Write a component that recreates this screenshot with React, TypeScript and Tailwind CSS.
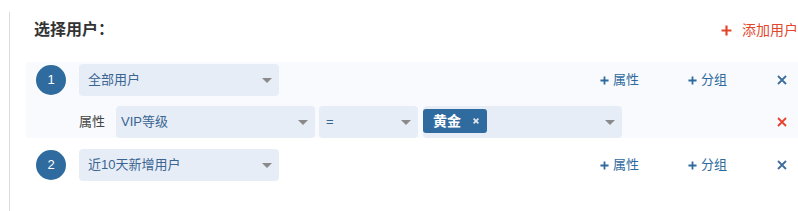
import React from 'react';

// ─── Small icons ──────────────────────────────────────────────────────────────
function PlusIcon({ className = '' }: { className?: string }) {
    return (
        <svg viewBox="0 0 10 10" className={className} fill="none" stroke="currentColor" strokeWidth={2}>
            <path d="M5 0.5v9M0.5 5h9" />
        </svg>
    );
}

function CrossIcon({ className = '', stroke = 1.8 }: { className?: string; stroke?: number }) {
    return (
        <svg viewBox="0 0 10 10" className={className} fill="none" stroke="currentColor" strokeWidth={stroke}>
            <path d="M1 1l8 8M9 1l-8 8" />
        </svg>
    );
}

function Caret() {
    return (
        <svg viewBox="0 0 10 5" className="w-[10px] h-[5px] text-[#8a8a8a]" fill="currentColor">
            <path d="M0 0h10L5 5z" />
        </svg>
    );
}

// ─── Select box ───────────────────────────────────────────────────────────────
function Select({ width, pl = 'pl-[9px]', children }: { width: string; pl?: string; children?: React.ReactNode }) {
    return (
        <div className={`${width} ${pl} h-[32px] shrink-0 flex items-center justify-between bg-[#e7edf7] rounded-[4px] pr-[7px] text-[13px] text-[#3a6592]`}>
            <div className="flex items-center">{children}</div>
            <Caret />
        </div>
    );
}

function Actions() {
    return (
        <div className="ml-auto flex items-center text-[13px] text-[#2f6a9e]">
            <span className="w-[88px] flex items-center gap-[4px]">
                <PlusIcon className="w-[9px] h-[9px]" />
                属性
            </span>
            <span className="w-[89px] flex items-center gap-[4px]">
                <PlusIcon className="w-[9px] h-[9px]" />
                分组
            </span>
            <CrossIcon className="w-[10px] h-[10px] text-[#3d6d9c]" />
        </div>
    );
}

function Badge({ n }: { n: number }) {
    return (
        <div className="w-[30px] h-[30px] shrink-0 rounded-full bg-[#2f6b9e] text-white text-[13px] flex items-center justify-center">
            {n}
        </div>
    );
}

export default function App() {
    return (
        <div
            className="w-[798px] h-[211px] overflow-hidden bg-white"
            style={{ fontFamily: '"Liberation Sans", "Noto Sans CJK SC", sans-serif' }}
        >
            <div className="ml-[9px] mt-[12px] h-[199px] border-l border-[#dcdcdc] pl-[16px]">
                {/* ── Title ── */}
                <div className="h-[36px] flex items-center justify-between pl-[8px]">
                    <h3 className="text-[16px] font-bold text-[#333]">选择用户：</h3>
                    <button className="flex items-center text-[14px] text-[#e2472d]">
                        <PlusIcon className="w-[11px] h-[11px] mr-[10px]" />
                        添加用户
                    </button>
                </div>

                {/* ── User 1 with attribute ── */}
                <div className="mt-[14px] w-[772px] bg-[#f8fafd] pt-[2px] pr-[11px]">
                    <div className="flex items-center h-[32px]">
                        <div className="w-[53px] pl-[10px]">
                            <Badge n={1} />
                        </div>
                        <Select width="w-[200px]">全部用户</Select>
                        <Actions />
                    </div>
                    <div className="mt-[10px] flex items-center h-[32px]">
                        <span className="w-[90px] pl-[53px] text-[13px] text-[#444]">属性</span>
                        <Select width="w-[199px]" pl="pl-[5px]">VIP等级</Select>
                        <div className="w-[4px]" />
                        <Select width="w-[99px]" pl="pl-[7px]">=</Select>
                        <div className="w-[5px]" />
                        <div className="w-[199px] h-[32px] shrink-0 flex items-center justify-between bg-[#e7edf7] rounded-[4px] pr-[7px]">
                            <span className="h-[24px] w-[64px] -mt-[2px] rounded-[3px] bg-[#2f6b9e] text-white text-[14px] font-bold flex items-center pl-[10px]">
                                黄金
                                <CrossIcon className="w-[6px] h-[6px] ml-[12px] text-[#e6e6f0]" stroke={2.8} />
                            </span>
                            <Caret />
                        </div>
                        <CrossIcon className="ml-auto w-[10px] h-[10px] text-[#e8412c]" />
                    </div>
                </div>

                {/* ── User 2 ── */}
                <div className="mt-[11px] w-[772px] pr-[11px] flex items-center h-[32px]">
                    <div className="w-[53px] pl-[10px]">
                        <Badge n={2} />
                    </div>
                    <Select width="w-[200px]">近10天新增用户</Select>
                    <Actions />
                </div>
            </div>
        </div>
    );
}
